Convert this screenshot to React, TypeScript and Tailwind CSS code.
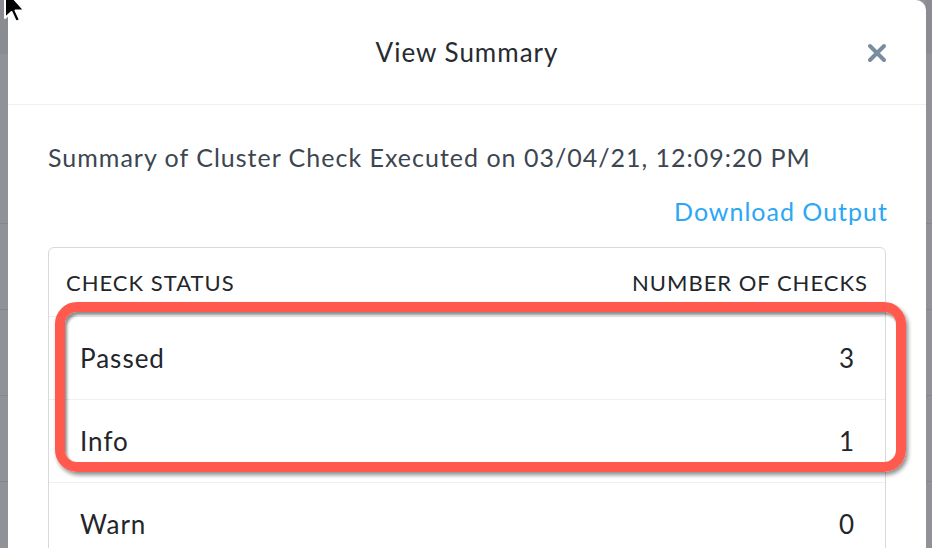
const rows = [
  { status: 'Passed', count: 3 },
  { status: 'Info', count: 1 },
  { status: 'Warn', count: 0 },
];

function Strip({ className }: { className: string }) {
  return (
    <div className={`flex flex-col shrink-0 ${className}`}>
      <div className="h-[54px] bg-[#8a8c91]" />
      <div className="h-[170px] border-b border-[#85878b]" />
      <div className="h-[86px] border-b border-[#85878b]" />
      <div className="h-[86px] border-b border-[#85878b]" />
      <div className="h-[86px] border-b border-[#85878b]" />
      <div className="flex-1" />
    </div>
  );
}

export default function App() {
  return (
    <div className="relative flex h-[548px] w-[932px] overflow-hidden bg-[#909297] font-['Lato',sans-serif] tracking-[1px]">
      <Strip className="w-2 bg-[#909297]" />

      <div className="flex flex-1 flex-col rounded-tr-[10px] bg-white">
        <div className="relative flex h-[105px] shrink-0 items-center justify-center border-b border-[#efefef] px-10">
          <h1 className="text-[26px] leading-[30px] text-[#272b31]">View Summary</h1>
          <button className="absolute right-[39px] top-[43px] text-[#7a8ca0]">
            <svg width="20" height="20" viewBox="0 0 20 20">
              <path d="M3 3 L17 17 M17 3 L3 17" stroke="currentColor" strokeWidth="4" strokeLinecap="round" />
            </svg>
          </button>
        </div>

        <div className="px-10">
          <p className="pt-[37px] text-[25px] leading-[30px] text-[#3c4650]">
            Summary of Cluster Check Executed on 03/04/21, 12:09:20 PM
          </p>
          <div className="-mr-[2px] mt-[24px] flex justify-end">
            <a className="text-[25px] leading-[30px] text-[#2aa7f5]">Download Output</a>
          </div>

          <div className="mt-[21px] rounded-[6px] border border-[#d6dadf] text-[#22262b]">
            <div className="flex h-[68px] items-center justify-between px-[17px] text-[22px] uppercase">
              <span>Check Status</span>
              <span>Number of Checks</span>
            </div>
            {rows.map(r => (
              <div key={r.status} className="flex h-[83px] items-center justify-between border-t border-[#efefef] pl-[31px] pr-[30px] text-[26px]">
                <span>{r.status}</span>
                <span>{r.count}</span>
              </div>
            ))}
          </div>
        </div>
      </div>

      <Strip className="w-[6px] bg-[#909297]" />

      {/* annotation highlight */}
      <div className="absolute left-[55px] top-[302px] h-[170px] w-[851px] rounded-[22px] border-[10px] border-[#ff5a4d] shadow-[2px_3px_4px_rgba(0,0,0,0.45),inset_2px_3px_3px_rgba(0,0,0,0.45)]" />

      {/* mouse cursor */}
      <svg className="absolute left-[1px] top-[-12px]" width="28" height="40" viewBox="0 0 28 40">
        <path d="M4 1 L4 30 L10.5 24 L15 34 L19 32 L14.5 22.5 L23.5 22.5 Z" fill="#000" stroke="#fff" strokeWidth="2" strokeLinejoin="round" />
      </svg>
    </div>
  );
}
